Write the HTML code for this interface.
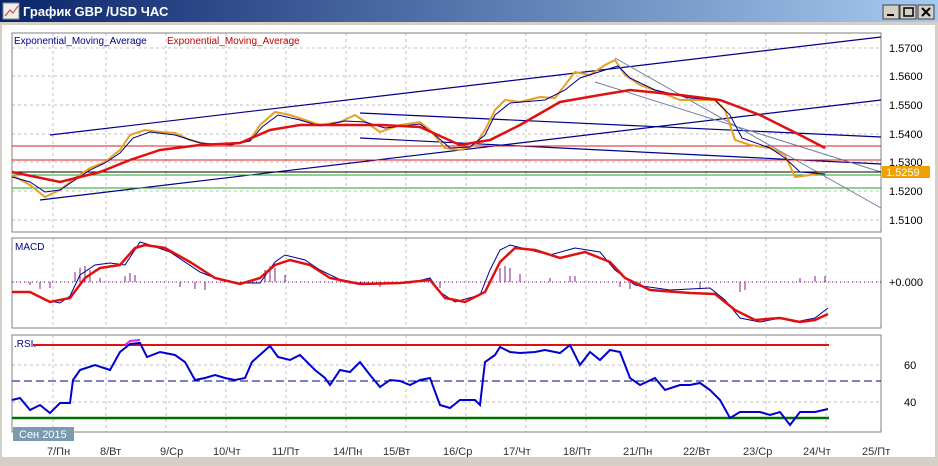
<!DOCTYPE html><html><head><meta charset="utf-8"><style>
body{margin:0;width:938px;height:461px;overflow:hidden;background:#d4d0c8;font-family:"Liberation Sans",sans-serif}
</style></head><body>
<svg width="938" height="461" xmlns="http://www.w3.org/2000/svg" font-family="Liberation Sans, DejaVu Sans, sans-serif">
<defs><linearGradient id="tb" x1="0" x2="1"><stop offset="0" stop-color="#0a246a"/><stop offset="1" stop-color="#a6caf0"/></linearGradient></defs>
<rect x="0" y="0" width="938" height="461" fill="#fff"/>
<rect x="0" y="0" width="938" height="22" fill="url(#tb)"/>
<rect x="3" y="3" width="16" height="16" fill="#eee" stroke="#888"/><path d="M5 16 L10 10 L13 13 L18 6" stroke="#c33" fill="none"/>
<text x="23" y="16" fill="#fff" font-weight="bold" font-size="13">График GBP /USD  ЧАС</text>
<g fill="#d4d0c8" stroke="#404040"><rect x="883" y="5" width="16" height="14"/><rect x="900" y="5" width="16" height="14"/><rect x="918" y="5" width="16" height="14"/></g>
<rect x="887" y="14" width="7" height="2" fill="#000"/><rect x="904" y="8" width="9" height="8" fill="none" stroke="#000" stroke-width="1.5"/>
<path d="M922 8 L930 16 M930 8 L922 16" stroke="#000" stroke-width="2"/>
<rect x="0" y="22" width="938" height="3" fill="#d4d0c8"/>
<rect x="0" y="22" width="2" height="439" fill="#d4d0c8"/><rect x="0" y="457" width="938" height="4" fill="#d4d0c8"/>
<rect x="935" y="22" width="3" height="439" fill="#d4d0c8"/>
<g stroke="#c0c0c0" stroke-dasharray="3,3">
<path d="M53 33V232M106 33V232M166 33V232M226 33V232M286 33V232M346 33V232M406 33V232M466 33V232M526 33V232M586 33V232M646 33V232M706 33V232M766 33V232M826 33V232"/>
<path d="M53 238V328M106 238V328M166 238V328M226 238V328M286 238V328M346 238V328M406 238V328M466 238V328M526 238V328M586 238V328M646 238V328M706 238V328M766 238V328M826 238V328"/>
<path d="M53 335V432M106 335V432M166 335V432M226 335V432M286 335V432M346 335V432M406 335V432M466 335V432M526 335V432M586 335V432M646 335V432M706 335V432M766 335V432M826 335V432"/>
<path d="M12 48H881M12 76H881M12 105H881M12 134H881M12 162H881M12 191H881M12 220H881M12 282H881M12 365H881M12 402H881"/>
</g>
<g fill="none" stroke="#808080"><rect x="12" y="33" width="869" height="199"/><rect x="12" y="238" width="869" height="90"/><rect x="12" y="335" width="869" height="97"/></g>
<text x="14" y="44" font-size="10" fill="#00008b">Exponential_Moving_Average</text><text x="167" y="44" font-size="10" fill="#c00000">Exponential_Moving_Average</text>
<g fill="none">
<path d="M50 135L881 37M40 200L881 100M360 113L881 137M360 138L881 164" stroke="#00008b" stroke-width="1.2"/>
<path d="M615 58L881 208M595 82L881 172" stroke="#7080a0"/>
<path d="M12 146H881M12 160H881" stroke="#d02020"/>
<path d="M12 188H881" stroke="#20a020"/><path d="M12 172H881" stroke="#000"/><path d="M12 175H881" stroke="#20a020"/>
<path d="M12 175L30 185L45 197L60 190L75 178L90 168L105 162L120 150L130 135L145 130L160 132L175 133L190 140L210 145L230 145L250 140L260 125L275 112L290 115L305 120L320 125L340 122L355 115L370 125L380 132L400 125L420 122L430 130L445 148L460 150L475 145L485 130L495 110L505 100L520 102L540 97L555 98L565 85L575 72L590 75L605 65L615 60L625 75L640 85L660 92L680 100L700 100L715 100L725 110L735 140L750 145L770 148L785 155L795 177L810 175L820 173" stroke="#e8a020" stroke-width="2"/>
<path d="M12 177L30 182L45 192L60 190L75 180L90 170L105 163L120 153L133 138L150 132L175 135L200 143L230 145L250 141L262 127L278 115L300 120L320 126L345 121L365 122L385 128L420 124L435 135L450 148L470 147L485 135L495 115L510 103L545 100L565 90L580 78L605 70L618 66L630 78L655 90L690 98L715 100L730 115L742 138L770 148L785 158L800 172L825 174" stroke="#00008b"/>
<path d="M12 172L60 182L100 172L130 160L160 150L200 145L240 143L270 130L300 125L340 125L380 125L420 127L460 145L490 140L520 125L560 102L600 95L630 90L680 95L720 100L760 115L800 135L825 148" stroke="#e01010" stroke-width="2.5"/>
</g>
<rect x="882" y="166" width="48" height="12" fill="#f0a000"/><text x="886" y="176" font-size="11" fill="#fff">1.5259</text>
<g font-size="11" fill="#000"><text x="889" y="52">1.5700</text><text x="889" y="80">1.5600</text><text x="889" y="109">1.5500</text><text x="889" y="138">1.5400</text><text x="889" y="166">1.5300</text><text x="889" y="195">1.5200</text><text x="889" y="224">1.5100</text><text x="889" y="286">+0.000</text><text x="904" y="369">60</text><text x="904" y="406">40</text></g>
<text x="15" y="250" font-size="10" fill="#00008b">MACD</text>
<path d="M12 282H881" stroke="#800080" stroke-dasharray="1,3"/>
<g stroke="#802080"><path d="M30 282V285M40 282V289M50 282V288M75 282V272M80 282V268M85 282V266M90 282V270M100 282V278M125 282V276M130 282V273M135 282V275M180 282V287M195 282V289M205 282V290M265 282V270M270 282V266M275 282V268M285 282V275M350 282V284M380 282V287M440 282V288M500 282V268M505 282V266M510 282V268M520 282V274M550 282V278M570 282V276M575 282V276M620 282V287M630 282V289M640 282V287M700 282V288M740 282V292M745 282V290M800 282V278M815 282V276M825 282V276"/></g>
<g fill="none">
<path d="M12 292L30 292L45 300L60 303L70 296L80 275L95 265L110 263L125 265L140 242L150 245L170 252L200 272L220 280L240 283L260 283L275 262L285 255L305 260L320 270L345 282L380 284L410 283L430 278L440 292L455 302L480 295L490 270L500 250L510 245L530 250L550 255L575 248L600 252L615 270L635 285L670 290L710 288L725 300L740 318L760 322L780 318L795 322L815 318L828 308" stroke="#00008b"/>
<path d="M12 292L30 292L50 302L70 298L85 278L100 268L120 265L135 248L145 245L165 248L190 262L215 278L240 284L260 278L275 265L290 260L310 265L330 278L360 284L400 283L430 280L445 298L465 302L485 292L500 262L515 248L535 250L560 258L585 252L610 262L625 278L650 290L690 293L715 294L735 310L755 320L780 318L800 322L815 320L828 314" stroke="#e01010" stroke-width="2.5"/>
</g>
<text x="14" y="347" font-size="10" fill="#00008b">.RSI.</text>
<path d="M33 345H829" stroke="#e01010" stroke-width="2"/>
<path d="M12 381H881" stroke="#00008b" stroke-dasharray="8,4"/>
<path d="M12 418H829" stroke="#007000" stroke-width="2.5"/>
<path d="M12 400L20 398L30 410L40 405L50 413L60 403L70 403L73 380L80 370L95 365L110 370L120 352L130 344L140 343L147 357L160 352L175 355L185 362L195 380L205 378L215 375L225 378L235 380L245 378L252 362L262 353L270 346L278 357L290 360L300 355L315 370L325 378L330 385L340 370L350 372L360 362L370 375L380 387L390 380L400 381L410 385L420 380L430 378L440 405L450 408L460 400L475 400L480 405L485 362L495 355L500 347L510 352L520 353L535 352L545 350L560 353L570 345L580 365L590 352L600 360L610 350L620 352L630 378L640 385L655 378L665 390L680 385L690 385L700 383L710 390L720 400L730 418L740 412L760 412L770 415L780 412L790 425L800 412L815 412L828 409" fill="none" stroke="#0000d0" stroke-width="2"/>
<path d="M125 345L130 341L140 340" stroke="#e020e0" fill="none" stroke-width="2"/>
<rect x="13" y="427" width="61" height="14" fill="#7a9ab0"/><text x="19" y="438" font-size="11" fill="#fff">Сен 2015</text>
<g font-size="11" fill="#333"><text x="47" y="455">7/Пн</text><text x="100" y="455">8/Вт</text><text x="160" y="455">9/Ср</text><text x="213" y="455">10/Чт</text><text x="272" y="455">11/Пт</text><text x="333" y="455">14/Пн</text><text x="383" y="455">15/Вт</text><text x="443" y="455">16/Ср</text><text x="503" y="455">17/Чт</text><text x="563" y="455">18/Пт</text><text x="623" y="455">21/Пн</text><text x="683" y="455">22/Вт</text><text x="743" y="455">23/Ср</text><text x="803" y="455">24/Чт</text><text x="862" y="455">25/Пт</text></g>
</svg>
</body></html>
